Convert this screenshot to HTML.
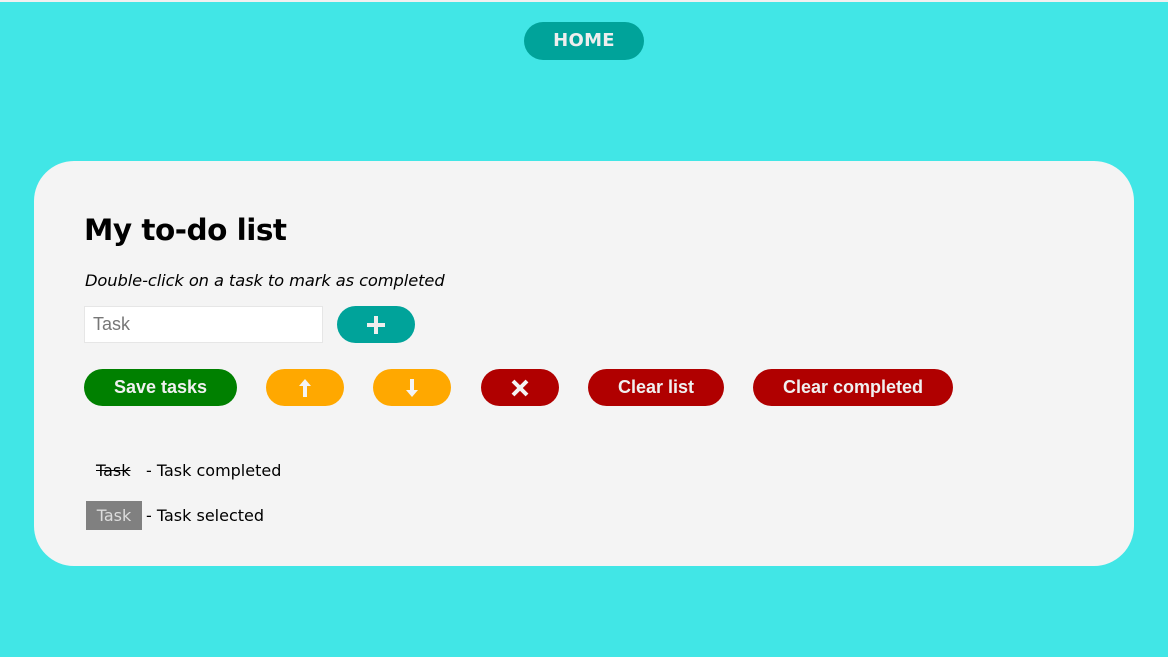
<!DOCTYPE html>
<html><head><meta charset="utf-8">
<style>
*{box-sizing:border-box;margin:0;padding:0}
body{width:1168px;height:657px;background:#41e6e6;position:relative;overflow:hidden;font-family:"DejaVu Sans","Liberation Sans",sans-serif}
.top{position:absolute;left:0;top:0;width:1168px;height:2px;background:#f0f0f0}
.home{position:absolute;left:524px;top:22px;width:120px;height:38px;border-radius:19px;background:#00a39a;color:#eee;font-weight:bold;font-size:18px;text-align:center;line-height:38px;letter-spacing:0.3px}
.card{position:absolute;left:34px;top:161px;width:1100px;height:405px;background:#f4f4f4;border-radius:40px}
h1{position:absolute;left:84px;top:213px;font-size:29.5px;font-weight:bold;color:#000;letter-spacing:-0.5px}
.hint{position:absolute;left:85px;top:271px;font-size:16.3px;font-style:italic;color:#000;letter-spacing:-0.1px}
.inp{position:absolute;left:84px;top:306px;width:239px;height:37px;background:#fff;border:1px solid #e6e6e6;font-family:"Liberation Sans",sans-serif;font-size:18px;color:#777;padding:7px 8px}
.btn{position:absolute;height:37px;border-radius:19px;color:#f0f0f0;font-family:"Liberation Sans",sans-serif;font-weight:bold;font-size:18px;text-align:center;line-height:37px;display:flex;align-items:center;justify-content:center}
.t{position:absolute;font-size:16px;color:#000}
</style></head><body>
<div class="top"></div>
<div class="home">HOME</div>
<div class="card"></div>
<h1>My to-do list</h1>
<div class="hint">Double-click on a task to mark as completed</div>
<div class="inp">Task</div>
<div class="btn" style="left:337px;top:306px;width:78px;background:#00a39a"><svg width="22" height="22" viewBox="0 0 22 22"><path d="M11 2v18M2 11h18" stroke="#eee" stroke-width="4"/></svg></div>
<div class="btn" style="left:84px;top:369px;width:153px;background:#008000">Save tasks</div>
<div class="btn" style="left:266px;top:369px;width:78px;background:#ffa800"><svg width="14" height="20" viewBox="0 0 14 20"><path d="M7 1L1 8h4v11h4V8h4z" fill="#f4f4f4"/></svg></div>
<div class="btn" style="left:373px;top:369px;width:78px;background:#ffa800"><svg width="14" height="20" viewBox="0 0 14 20"><path d="M7 19L1 12h4V1h4v11h4z" fill="#f4f4f4"/></svg></div>
<div class="btn" style="left:481px;top:369px;width:78px;background:#b00000"><svg width="18" height="18" viewBox="0 0 18 18"><path d="M2 2L16 16M16 2L2 16" stroke="#f4f4f4" stroke-width="4"/></svg></div>
<div class="btn" style="left:588px;top:369px;width:136px;background:#b00000">Clear list</div>
<div class="btn" style="left:753px;top:369px;width:200px;background:#b00000">Clear completed</div>
<div class="t" style="left:96px;top:461px;text-decoration:line-through">Task</div>
<div class="t" style="left:146px;top:461px">- Task completed</div>
<div style="position:absolute;left:86px;top:501px;width:56px;height:29px;background:#808080;color:#ddd;font-size:16px;text-align:center;line-height:29px">Task</div>
<div class="t" style="left:146px;top:506px">- Task selected</div>
</body></html>
